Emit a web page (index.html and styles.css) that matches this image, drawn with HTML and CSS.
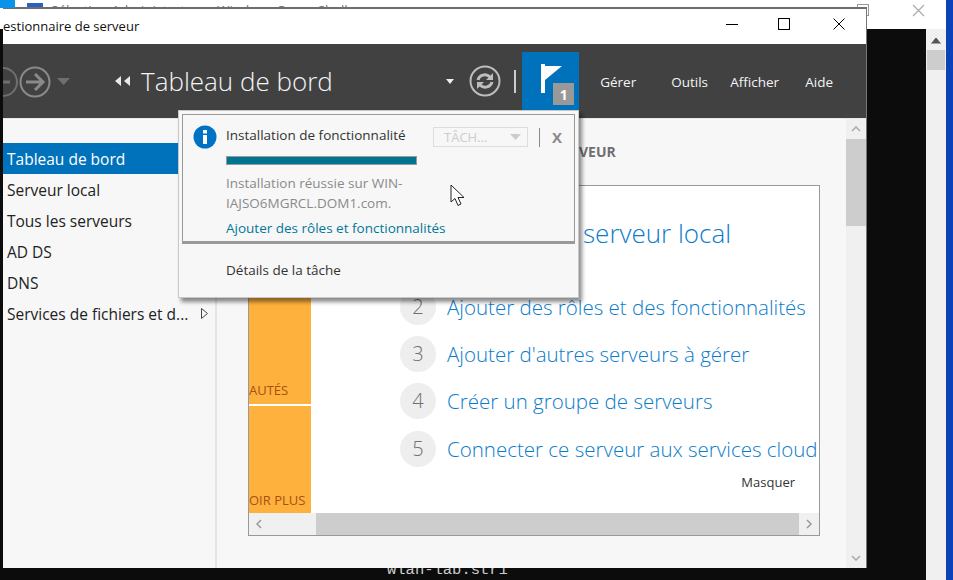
FILE: index.html
```html
<!DOCTYPE html>
<html lang="fr">

<head>
  <meta charset="UTF-8">
  <meta name="viewport" content="width=device-width, initial-scale=1.0">
  <title>Gestionnaire de serveur</title>
  <link rel="stylesheet" href="styles.css">
</head>

<body>
  <div class="desktop">
    <div class="corner-tile"></div>

    <!-- PowerShell window behind -->
    <div class="console">
      <div class="console-title">
        <svg class="console-icon" width="16" height="12" viewBox="0 0 16 12"><rect width="16" height="12" fill="#2a5fc4"/></svg>
        <span class="console-name">Sélection Administrateur : Windows PowerShell</span>
        <svg class="console-restore" width="12" height="12" viewBox="0 0 12 12"><rect x="0.5" y="0.5" width="11" height="11" fill="none" stroke="#999"/></svg>
        <svg class="console-close" width="13" height="13" viewBox="0 0 13 13"><path d="M1 1L12 12M12 1L1 12" stroke="#aaa" stroke-width="1.2"/></svg>
      </div>
      <div class="console-body">
        <div class="console-screen">
          <span class="console-text">wlan-lab.str1</span>
        </div>
        <div class="console-scroll">
          <svg class="console-up" width="10" height="7" viewBox="0 0 10 7"><path d="M0.5 6.5L5 1L9.500 6.5" fill="#555" stroke="#555"/></svg>
          <div class="console-thumb"></div>
        </div>
      </div>
    </div>

    <!-- Server manager -->
    <div class="window">
      <div class="titlebar">
        <span class="window-name">estionnaire de serveur</span>
        <svg class="win-btn win-min" width="12" height="12" viewBox="0 0 12 12"><path d="M0 6.5H12" stroke="#000"/></svg>
        <svg class="win-btn win-max" width="12" height="12" viewBox="0 0 12 12"><rect x="0.5" y="0.5" width="11" height="11" fill="none" stroke="#000"/></svg>
        <svg class="win-btn win-close" width="12" height="12" viewBox="0 0 12 12"><path d="M0.5 0.5L11.5 11.5M11.5 0.5L0.5 11.5" stroke="#000"/></svg>
      </div>

      <div class="header">
        <div class="nav-arrows">
          <svg class="nav-back" width="30" height="30" viewBox="0 0 30 30"><circle cx="15" cy="15" r="14" fill="none" stroke="#6f6f6f" stroke-width="2"/><path d="M8 15H22" stroke="#6f6f6f" stroke-width="3"/></svg>
          <svg class="nav-next" width="32" height="32" viewBox="0 0 32 32"><circle cx="16" cy="16" r="14.5" fill="none" stroke="#8a8a8a" stroke-width="2"/><path d="M7 16H24M16 8L24 16L16 24" fill="none" stroke="#8a8a8a" stroke-width="3"/></svg>
          <svg class="nav-drop" width="13" height="7" viewBox="0 0 13 7"><path d="M0 0H13L6.5 7Z" fill="#6f6f6f"/></svg>
        </div>
        <svg class="crumb-arrows" width="16" height="10" viewBox="0 0 16 10"><path d="M6 0V10L0 5Z M15 0V10L9 5Z" fill="#e8e8e8"/></svg>
        <h1 class="page-title">Tableau de bord</h1>
        <svg class="refresh-drop" width="8" height="5" viewBox="0 0 8 5"><path d="M0 0H8L4 5Z" fill="#eee"/></svg>
        <svg class="refresh" width="32" height="32" viewBox="0 0 32 32">
          <circle cx="16" cy="16" r="14.5" fill="none" stroke="#bdbdbd" stroke-width="2"/>
          <path d="M9 15C10 10 17 8 21 12M23 17C22 22 15 24 11 20" fill="none" stroke="#bdbdbd" stroke-width="3"/>
          <path d="M24 8V15H17Z M8 24V17H15Z" fill="#bdbdbd"/>
        </svg>
        <div class="head-sep"></div>
        <div class="flag-tile">
          <svg class="flag" width="21" height="29" viewBox="0 0 21 29"><path d="M0 0H4V2H21L4 16V29H0Z" fill="#fff"/></svg>
          <span class="flag-count">1</span>
        </div>
        <nav class="menu">
          <span class="menu-item menu-gerer">Gérer</span>
          <span class="menu-item menu-outils">Outils</span>
          <span class="menu-item menu-afficher">Afficher</span>
          <span class="menu-item">Aide</span>
        </nav>
      </div>

      <div class="content">
        <ul class="sidebar">
          <li class="side-item selected">Tableau de bord</li>
          <li class="side-item">Serveur local</li>
          <li class="side-item">Tous les serveurs</li>
          <li class="side-item">AD DS</li>
          <li class="side-item">DNS</li>
          <li class="side-item">Services de fichiers et d...
            <svg class="side-arrow" width="7" height="11" viewBox="0 0 7 11"><path d="M0.5 0.5L6.5 5.5L0.5 10.5Z" fill="none" stroke="#444"/></svg>
          </li>
        </ul>

        <div class="main">
          <h2 class="welcome">VEUR</h2>
          <div class="welcome-box">
            <div class="welcome-top">
              <div class="tiles">
                <div class="tile"></div>
                <div class="tile"><span>AUTÉS</span></div>
                <div class="tile"><span>OIR PLUS</span></div>
              </div>
              <div class="steps-pane">
                <div class="step step-big"><span class="step-big-text">serveur local</span></div>
                <div class="step"><span class="step-num">2</span><span class="step-link">Ajouter des rôles et des fonctionnalités</span></div>
                <div class="step"><span class="step-num">3</span><span class="step-link">Ajouter d'autres serveurs à gérer</span></div>
                <div class="step"><span class="step-num">4</span><span class="step-link">Créer un groupe de serveurs</span></div>
                <div class="step"><span class="step-num">5</span><span class="step-link">Connecter ce serveur aux services cloud</span></div>
                <div class="hide-link">Masquer</div>
              </div>
            </div>
            <div class="hscroll">
              <div class="hscroll-btn hscroll-left">
                <svg width="6" height="10" viewBox="0 0 6 10"><path d="M5 1L1 5L5 9" fill="none" stroke="#999" stroke-width="1.5"/></svg>
              </div>
              <div class="hscroll-thumb"></div>
              <div class="hscroll-btn">
                <svg width="6" height="10" viewBox="0 0 6 10"><path d="M1 1L5 5L1 9" fill="none" stroke="#999" stroke-width="1.5"/></svg>
              </div>
            </div>
          </div>
        </div>

        <div class="vscroll">
          <div class="vscroll-btn">
            <svg width="10" height="6" viewBox="0 0 10 6"><path d="M1 5L5 1L9 5" fill="none" stroke="#aaa" stroke-width="1.5"/></svg>
          </div>
          <div class="vscroll-thumb"></div>
          <div class="vscroll-track"></div>
          <div class="vscroll-btn">
            <svg width="10" height="6" viewBox="0 0 10 6"><path d="M1 1L5 5L9 1" fill="none" stroke="#aaa" stroke-width="1.5"/></svg>
          </div>
        </div>
      </div>
    </div>

    <!-- Notification flyout -->
    <div class="flyout">
      <div class="task">
        <svg class="task-icon" width="24" height="24" viewBox="0 0 24 24"><circle cx="12" cy="12" r="11.5" fill="#0072c6"/><rect x="10" y="10" width="4" height="9" fill="#fff"/><rect x="10" y="5" width="4" height="3.5" fill="#fff"/></svg>
        <div class="task-body">
          <div class="task-head">
            <span class="task-title">Installation de fonctionnalité</span>
            <div class="task-btn">
              <span>TÂCH...</span>
              <svg width="11" height="6" viewBox="0 0 11 6"><path d="M0 0H11L5.5 6Z" fill="#ccc"/></svg>
            </div>
            <div class="task-sep"></div>
            <span class="task-close">X</span>
          </div>
          <div class="progress"></div>
          <p class="task-msg">Installation réussie sur WIN-<br>IAJSO6MGRCL.DOM1.com.</p>
          <a class="task-link" href="#">Ajouter des rôles et fonctionnalités</a>
        </div>
      </div>
      <div class="task-details">Détails de la tâche</div>
    </div>

    <svg class="cursor" width="16" height="23" viewBox="0 0 16 23"><path d="M1 1V18L5 14.5L8 21.5L11 20L8 13.5H14Z" fill="#fff" stroke="#222"/></svg>
  </div>
</body>

</html>
```
FILE: styles.css
```css
* {
  box-sizing: border-box;
}

body {
  margin: 0;
  font-family: "Open Sans", "Noto Sans", Arial, sans-serif;
}

h1, h2, p, ul {
  margin: 0;
  padding: 0;
}

.desktop {
  position: relative;
  width: 953px;
  height: 580px;
  overflow: hidden;
  background: #000;
}

.corner-tile {
  position: absolute;
  left: 0;
  top: 0;
  width: 15px;
  height: 8px;
  background: #0a94e8;
  z-index: 1;
}

/* console behind */
.console {
  position: absolute;
  left: 0;
  top: 0;
  width: 946px;
  height: 580px;
  display: flex;
  flex-direction: column;
  box-shadow: 7px 0 0 #0a44b4;
}

.console-title {
  height: 29px;
  background: #fff;
  flex: none;
  display: flex;
  align-items: flex-start;
  padding: 3px 21px 0 27px;
}

.console-icon {
  flex: none;
}

.console-name {
  margin-left: 8px;
  font-size: 13.5px;
  line-height: 14px;
  color: #777;
}

.console-restore {
  margin-left: auto;
  margin-top: 1px;
}

.console-close {
  margin-left: 43px;
  margin-top: 1px;
}

.console-body {
  flex: 1;
  display: flex;
  min-height: 0;
}

.console-screen {
  flex: 1;
  background: #0c0c0c;
  display: flex;
  align-items: flex-end;
  padding-left: 387px;
}

.console-text {
  font-family: "Liberation Mono", monospace;
  font-size: 15.5px;
  line-height: 16px;
  color: #ccc;
  margin-bottom: 2px;
}

.console-scroll {
  width: 20px;
  flex: none;
  background: #f0f0f0;
  display: flex;
  flex-direction: column;
  align-items: center;
  padding-top: 8px;
}

.console-thumb {
  width: 18px;
  height: 20px;
  background: #cdcdcd;
  margin-top: 6px;
}

/* main window */
.window {
  position: absolute;
  left: 3px;
  top: 7px;
  width: 864px;
  height: 561px;
  display: flex;
  flex-direction: column;
  background: #f7f7f7;
  border-top: 2px solid #6e6e6e;
  border-right: 1px solid #777;
}

.titlebar {
  height: 35px;
  flex: none;
  background: #fff;
  display: flex;
  align-items: center;
}

.window-name {
  font-size: 13px;
  color: #111;
  margin-top: -1px;
}

.win-btn {
  flex: none;
  margin-top: -6px;
}

.win-min {
  margin-left: auto;
}

.win-max {
  margin-left: 40px;
}

.win-close {
  margin-left: 43px;
  margin-right: 21px;
}

.header {
  height: 74px;
  flex: none;
  background: #414141;
  display: flex;
  align-items: center;
  color: #fff;
  overflow: hidden;
}

.nav-arrows {
  display: flex;
  align-items: center;
  width: 108px;
  margin-top: 1px;
  flex: none;
}

.nav-back {
  margin-left: -15px;
  flex: none;
}

.nav-next {
  margin-left: 1px;
  flex: none;
}

.nav-drop {
  margin-left: 6px;
}

.crumb-arrows {
  flex: none;
  margin-left: 4px;
}

.page-title {
  font-size: 26px;
  font-weight: 300;
  color: #f4f4f4;
  margin-left: 10px;
  white-space: nowrap;
}

.refresh-drop {
  margin-left: auto;
  flex: none;
}

.refresh {
  margin-left: 15px;
  flex: none;
}

.head-sep {
  width: 2px;
  height: 23px;
  background: #ccc;
  margin-left: 13px;
  flex: none;
}

.flag-tile {
  position: relative;
  width: 57px;
  height: 66px;
  align-self: flex-end;
  background: #0072bc;
  margin-left: 6px;
  flex: none;
  padding: 12px 0 0 19px;
}

.flag {
  display: block;
}

.flag-count {
  position: absolute;
  left: 31px;
  top: 31px;
  width: 21px;
  height: 22px;
  background: #999;
  font-size: 14px;
  font-weight: 700;
  line-height: 23px;
  text-align: center;
  color: #fff;
}

.menu {
  display: flex;
  padding-left: 21px;
  font-size: 13.5px;
  color: #f4f4f4;
  margin-top: 1px;
}

.menu-item {
  white-space: nowrap;
}

.menu-gerer {
  width: 71px;
}

.menu-outils {
  width: 59px;
}

.menu-afficher {
  width: 75px;
}

.menu-item:last-child {
  margin-right: 33px;
}

.content {
  flex: 1;
  display: flex;
  min-height: 0;
  border-top: 1px solid #e8e8e8;
}

/* sidebar */
.sidebar {
  width: 214px;
  flex: none;
  list-style: none;
  padding-top: 24px;
  border-right: 2px solid #e4e4e4;
  font-size: 15.5px;
  color: #222;
}

.side-item {
  position: relative;
  height: 31px;
  line-height: 32px;
  padding-left: 4px;
  white-space: nowrap;
}

.side-item.selected {
  background: #0072bc;
  color: #fff;
}

.side-arrow {
  position: absolute;
  left: 198px;
  top: 10px;
}

/* welcome panel */
.main {
  flex: 1;
  min-width: 0;
  padding: 23px 26px 0 31px;
}

.welcome {
  font-size: 14px;
  line-height: 20px;
  font-weight: 700;
  color: #6f6f6f;
  white-space: nowrap;
  height: 20px;
  padding-left: 331px;
}

.welcome-box {
  margin-top: 23px;
  height: 351px;
  display: flex;
  flex-direction: column;
  background: #fff;
  border: 1px solid #999;
}

.welcome-top {
  flex: 1;
  display: flex;
  min-height: 0;
}

.tiles {
  width: 62px;
  flex: none;
  display: flex;
  flex-direction: column;
  gap: 2px;
  overflow: hidden;
  background: #fff;
}

.tile {
  flex: 1;
  background: #ffb13d;
  color: #a9500f;
  font-size: 13px;
  white-space: nowrap;
  display: flex;
  align-items: flex-end;
  padding-bottom: 5px;
}

.tile:last-child {
  padding-bottom: 4px;
}

.steps-pane {
  flex: 1;
  min-width: 0;
  overflow: hidden;
  padding: 30px 0 0 89px;
  font-weight: 300;
}

.step {
  display: flex;
  align-items: center;
  height: 47.4px;
  white-space: nowrap;
}

.step-big {
  height: 36px;
  margin-bottom: 31px;
  padding-left: 183px;
}

.step-num {
  width: 36px;
  height: 36px;
  flex: none;
  border-radius: 50%;
  background: #eee;
  color: #707070;
  font-size: 20px;
  line-height: 36px;
  text-align: center;
  margin-right: 11px;
}

.step-link {
  font-size: 20.5px;
  color: #0a7ccb;
}

.step-big-text {
  font-size: 26px;
  color: #0a7ccb;
  margin-top: -2px;
}

.hide-link {
  font-size: 13px;
  font-weight: 400;
  color: #333;
  text-align: right;
  padding-right: 24px;
}

.hscroll {
  height: 22px;
  flex: none;
  display: flex;
  background: #f0f0f0;
}

.hscroll-btn {
  width: 20px;
  flex: none;
  display: flex;
  align-items: center;
  justify-content: center;
}

.hscroll-left {
  width: 67px;
  justify-content: flex-start;
  padding-left: 7px;
}

.hscroll-thumb {
  flex: 1;
  background: #cdcdcd;
}

.vscroll {
  width: 20px;
  flex: none;
  display: flex;
  flex-direction: column;
  background: #f0f0f0;
}

.vscroll-btn {
  height: 20px;
  flex: none;
  display: flex;
  align-items: center;
  justify-content: center;
}

.vscroll-thumb {
  height: 87px;
  flex: none;
  background: #cdcdcd;
}

.vscroll-track {
  flex: 1;
}

/* flyout */
.flyout {
  position: absolute;
  left: 178px;
  top: 110px;
  width: 401px;
  height: 188px;
  background: #f7f7f7;
  border: 1px solid #c8c8c8;
  box-shadow: 3px 4px 4px rgba(0, 0, 0, 0.45);
  padding: 3px 3px 0 3px;
  z-index: 3;
}

.task {
  height: 130px;
  border: 1px solid #999;
  border-bottom-width: 3px;
  display: flex;
  padding: 10px 0 0 10px;
}

.task-icon {
  flex: none;
}

.task-body {
  margin-left: 9px;
  flex: 1;
  min-width: 0;
}

.task-head {
  display: flex;
  align-items: center;
  height: 20px;
  margin-top: 2px;
}

.task-title {
  font-size: 13.5px;
  color: #333;
  width: 207px;
  margin-top: -4px;
  white-space: nowrap;
}

.task-btn {
  width: 95px;
  height: 20px;
  border: 1px solid #ddd;
  display: flex;
  align-items: center;
  padding: 0 6px 0 10px;
  justify-content: space-between;
  font-size: 13px;
  color: #ccc;
  flex: none;
}

.task-sep {
  width: 1px;
  height: 19px;
  background: #888;
  margin-left: 11px;
  flex: none;
}

.task-close {
  margin-left: 12px;
  font-size: 15px;
  font-weight: 700;
  color: #8a8a8a;
}

.progress {
  width: 191px;
  height: 9px;
  margin-top: 9px;
  background: #00758f;
  border: 1px solid #999;
}

.task-msg {
  margin-top: 8px;
  font-size: 13.5px;
  line-height: 20px;
  color: #8a8a8a;
}

.task-link {
  display: block;
  margin-top: 5px;
  font-size: 13.5px;
  line-height: 20px;
  color: #00789a;
  text-decoration: none;
  white-space: nowrap;
}

.task-details {
  padding: 16px 0 0 44px;
  font-size: 13.5px;
  line-height: 20px;
  color: #333;
}

.cursor {
  position: absolute;
  left: 450px;
  top: 184px;
  z-index: 4;
}
```
